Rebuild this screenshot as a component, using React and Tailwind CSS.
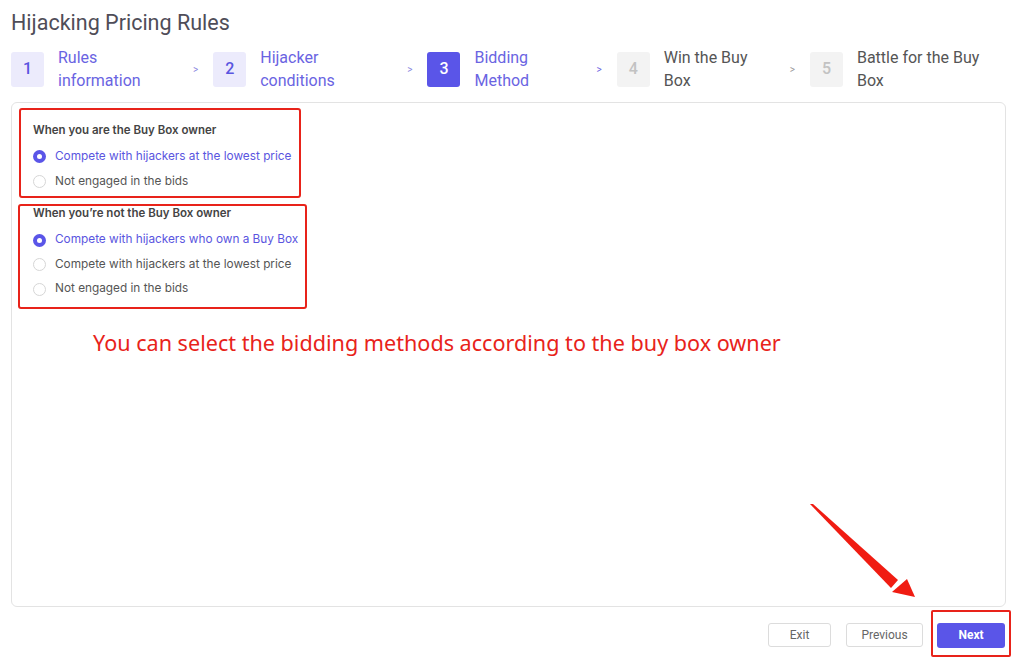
import React from 'react';

const steps = [
  { n: 1, label: ['Rules', 'information'], state: 'done', w: 'w-[182px]' },
  { n: 2, label: ['Hijacker', 'conditions'], state: 'done', w: 'w-[194px]' },
  { n: 3, label: ['Bidding', 'Method'], state: 'active', w: 'w-[169px]' },
  { n: 4, label: ['Win the Buy', 'Box'], state: 'todo', w: 'w-[173px]' },
  { n: 5, label: ['Battle for the Buy', 'Box'], state: 'todo', w: 'w-[180px]' },
];

function Step({ step }) {
  const box =
    step.state === 'active'
      ? 'bg-[#5a55e8] text-white'
      : step.state === 'done'
      ? 'bg-[#ecebfc] text-[#5a55e0]'
      : 'bg-[#f3f3f3] text-[#c2c2c2]';
  const txt = step.state === 'todo' ? 'text-[#555]' : 'text-[#6a64e2]';
  return (
    <div className={`flex items-center shrink-0 ${step.w}`}>
      <div className={`w-[33px] h-[35px] rounded-[3px] flex items-center justify-center text-[16px] font-medium ${box}`}>
        {step.n}
      </div>
      <div className={`ml-[14px] text-[16px] leading-[23px] ${txt}`}>
        <div>{step.label[0]}</div>
        <div>{step.label[1]}</div>
      </div>
    </div>
  );
}

function Radio({ checked, children }) {
  return (
    <div className="flex items-center h-full">
      {checked ? (
        <span className="w-[13px] h-[13px] rounded-full bg-[#5a55e8] flex items-center justify-center">
          <span className="w-[5px] h-[5px] rounded-full bg-white" />
        </span>
      ) : (
        <span className="w-[13px] h-[13px] rounded-full border border-[#d6d6d6] bg-white" />
      )}
      <span className={`ml-[9px] text-[11.8px] ${checked ? 'text-[#5a55e0]' : 'text-[#555]'}`}>{children}</span>
    </div>
  );
}

export default function App() {
  return (
    <div className="relative w-[1019px] h-[661px] bg-white overflow-hidden" style={{ fontFamily: 'Roboto, "Liberation Sans", sans-serif' }}>
      {/* --- TITRE --- */}
      <h1 className="pl-[11px] pt-[10px] text-[21.5px] leading-[25px] text-[#4f4d58]">Hijacking Pricing Rules</h1>

      {/* --- ÉTAPES --- */}
      <div className="flex items-center pl-[11px] mt-[11px] h-[46px]">
        {steps.map((s, i) => (
          <React.Fragment key={s.n}>
            <Step step={s} />
            {i < steps.length - 1 && (
              <span className={`text-[10px] mr-[15px] ${i < 2 ? 'text-[#8a86e0]' : i === 2 ? 'text-[#6a64e2]' : 'text-[#999]'}`}>&gt;</span>
            )}
          </React.Fragment>
        ))}
      </div>

      {/* --- PANNEAU --- */}
      <div className="relative mx-[11px] mt-[10px] w-[995px] h-[505px] border border-[#e3e3e3] rounded-[6px]">
        <div className="pl-[6px] pt-[5px]" style={{ fontFamily: 'Inter, Roboto, sans-serif' }}>
          <div className="ml-[1px] w-[282px] h-[90px] border-2 border-[#e8231a] rounded-[3px] pl-[12px] pt-[12px]">
            <div className="text-[11.5px] leading-[16px] font-semibold text-[#444]">When you are the Buy Box owner</div>
            <div className="mt-[6px] h-[25px]"><Radio checked>Compete with hijackers at the lowest price</Radio></div>
            <div className="h-[25px]"><Radio>Not engaged in the bids</Radio></div>
          </div>
          <div className="mt-[6px] w-[289px] h-[105px] border-2 border-[#e8231a] rounded-[3px] pl-[13px]">
            <div className="text-[11.5px] leading-[14px] font-semibold text-[#444]">When you’re not the Buy Box owner</div>
            <div className="mt-[8px] h-[24.5px]"><Radio checked>Compete with hijackers who own a Buy Box</Radio></div>
            <div className="h-[24.5px]"><Radio>Compete with hijackers at the lowest price</Radio></div>
            <div className="h-[24.5px]"><Radio>Not engaged in the bids</Radio></div>
          </div>
        </div>

        <p className="ml-[81px] mt-[19px] text-[21.6px] leading-[30px] text-[#e8231a]" style={{ fontFamily: '"Noto Sans", sans-serif' }}>
          You can select the bidding methods according to the buy box owner
        </p>

        {/* flèche d'annotation */}
        <svg className="absolute left-[790px] top-[392px]" width="120" height="110" viewBox="0 0 120 110">
          <polygon points="8,9 11,9 96,85 89,93" fill="#f01c12" />
          <polygon points="113,102 105,84 90,97" fill="#f01c12" />
        </svg>
      </div>

      {/* --- BOUTONS --- */}
      <div className="flex justify-end items-start pr-[8px] mt-[3px]">
        <button className="mt-[13px] w-[63px] h-[24px] border border-[#dcdcdc] rounded-[3px] text-[12px] text-[#666] bg-white">Exit</button>
        <button className="mt-[13px] ml-[15px] w-[77px] h-[24px] border border-[#dcdcdc] rounded-[3px] text-[12px] text-[#666] bg-white">Previous</button>
        <div className="ml-[8px] border-2 border-[#e8231a] rounded-[2px] pl-[4px] pr-[4px] pt-[10px] pb-[7px]">
          <button className="w-[68px] h-[25px] rounded-[3px] bg-[#5a55e8] text-white text-[12px] font-bold">Next</button>
        </div>
      </div>
    </div>
  );
}
